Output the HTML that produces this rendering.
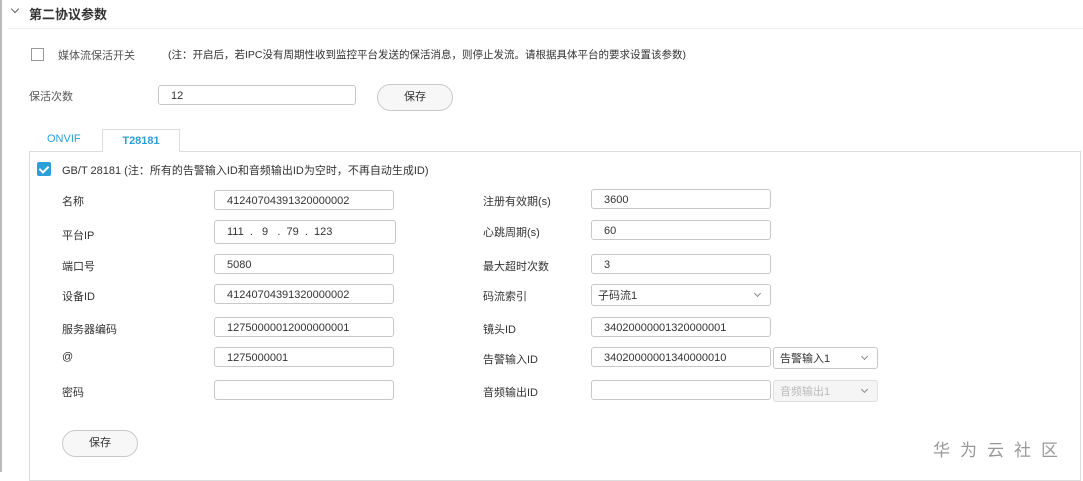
<!DOCTYPE html>
<html><head><meta charset="utf-8"><style>
body{margin:0;width:1083px;height:472px;background:#fff;font-family:"Liberation Sans","Noto Sans CJK SC",sans-serif;font-size:11px;color:#333;position:relative;overflow:hidden}
.a{position:absolute;white-space:nowrap}
.in{position:absolute;border:1px solid #c8c8c8;border-radius:3px;height:20px;box-sizing:border-box;line-height:20px;padding-left:12px;font-size:11px;color:#333;background:#fff}
.btn{position:absolute;border:1px solid #c8c8c8;border-radius:14px;background:#f7f7f7;text-align:center;box-sizing:border-box;font-size:11px}
.sel:after{content:"";position:absolute;right:10px;top:6px;width:4px;height:4px;border-right:1px solid #888;border-bottom:1px solid #888;transform:rotate(45deg)}
</style></head><body>
<div class="a" style="left:0;top:0;width:2px;height:472px;background:#bbb"></div>
<div class="a" style="left:12px;top:6px;width:5px;height:5px;border-right:1.5px solid #666;border-bottom:1.5px solid #666;transform:rotate(45deg)"></div>
<div class="a" style="left:29px;top:4px;font-size:13px;font-weight:bold;color:#333">第二协议参数</div>
<div class="a" style="left:8px;top:28px;width:1075px;height:1px;background:#eee"></div>
<div class="a" style="left:31px;top:48px;width:13px;height:13px;border:1px solid #999;box-sizing:border-box;background:#fff"></div>
<div class="a" style="left:58px;top:47px;color:#555">媒体流保活开关</div>
<div class="a" style="left:168px;top:47px;font-size:10.5px">(注：开启后，若IPC没有周期性收到监控平台发送的保活消息，则停止发流。请根据具体平台的要求设置该参数)</div>
<div class="a" style="left:29px;top:88px;color:#555">保活次数</div>
<div class="in" style="left:158px;top:85px;width:198px">12</div>
<div class="btn" style="left:377px;top:84px;width:76px;height:27px;line-height:25px">保存</div>
<div class="a" style="left:47px;top:133px;color:#2a9fd8">ONVIF</div>
<div class="a" style="left:102px;top:129px;width:78px;height:23px;border:1px solid #ddd;border-bottom:none;background:#fff;box-sizing:border-box;z-index:2;text-align:center;line-height:22px;color:#2a9fd8;font-weight:bold">T28181</div>
<div class="a" style="left:29px;top:151px;width:1052px;height:330px;border:1px solid #ddd;box-sizing:border-box"></div>
<div class="a" style="left:37px;top:162px;width:14px;height:14px;background:#2a9fd8;border-radius:2px"></div>
<div class="a" style="left:41px;top:164px;width:4px;height:7px;border-right:2px solid #fff;border-bottom:2px solid #fff;transform:rotate(45deg)"></div>
<div class="a" style="left:62px;top:162px">GB/T 28181 (注：所有的告警输入ID和音频输出ID为空时，不再自动生成ID)</div>

<div class="a" style="left:62px;top:193px">名称</div><div class="in" style="left:214px;top:190px;width:180px">41240704391320000002</div>
<div class="a" style="left:62px;top:227px">平台IP</div><div class="in" style="left:214px;top:220px;width:182px;height:24px;line-height:22px">111 &nbsp;. &nbsp;&nbsp;9 &nbsp;&nbsp;. &nbsp;79 &nbsp;. &nbsp;123</div>
<div class="a" style="left:62px;top:258px">端口号</div><div class="in" style="left:214px;top:254px;width:180px">5080</div>
<div class="a" style="left:62px;top:288px">设备ID</div><div class="in" style="left:214px;top:284px;width:180px">41240704391320000002</div>
<div class="a" style="left:62px;top:321px">服务器编码</div><div class="in" style="left:214px;top:317px;width:180px">12750000012000000001</div>
<div class="a" style="left:62px;top:351px">@</div><div class="in" style="left:214px;top:347px;width:180px">1275000001</div>
<div class="a" style="left:62px;top:384px">密码</div><div class="in" style="left:214px;top:380px;width:180px"></div>
<div class="btn" style="left:62px;top:430px;width:76px;height:27px;line-height:25px">保存</div>

<div class="a" style="left:483px;top:193px">注册有效期(s)</div><div class="in" style="left:591px;top:189px;width:180px">3600</div>
<div class="a" style="left:483px;top:224px">心跳周期(s)</div><div class="in" style="left:591px;top:220px;width:180px">60</div>
<div class="a" style="left:483px;top:258px">最大超时次数</div><div class="in" style="left:591px;top:254px;width:180px">3</div>
<div class="a" style="left:483px;top:288px">码流索引</div><div class="in sel" style="left:591px;top:284px;width:180px;height:22px;line-height:22px;padding-left:6px">子码流1</div>
<div class="a" style="left:483px;top:321px">镜头ID</div><div class="in" style="left:591px;top:317px;width:180px">34020000001320000001</div>
<div class="a" style="left:483px;top:351px">告警输入ID</div><div class="in" style="left:591px;top:347px;width:180px">34020000001340000010</div>
<div class="in sel" style="left:773px;top:347px;width:105px;height:22px;line-height:22px;padding-left:6px">告警输入1</div>
<div class="a" style="left:483px;top:384px">音频输出ID</div><div class="in" style="left:591px;top:380px;width:180px"></div>
<div class="in sel" style="left:773px;top:380px;width:105px;height:22px;line-height:22px;padding-left:6px;background:#f5f5f5;color:#bbb;border-color:#e0e0e0">音频输出1</div>
<div class="a" style="left:933px;top:436px;font-size:17px;color:#999;letter-spacing:10px">华为云社区</div>
</body></html>
